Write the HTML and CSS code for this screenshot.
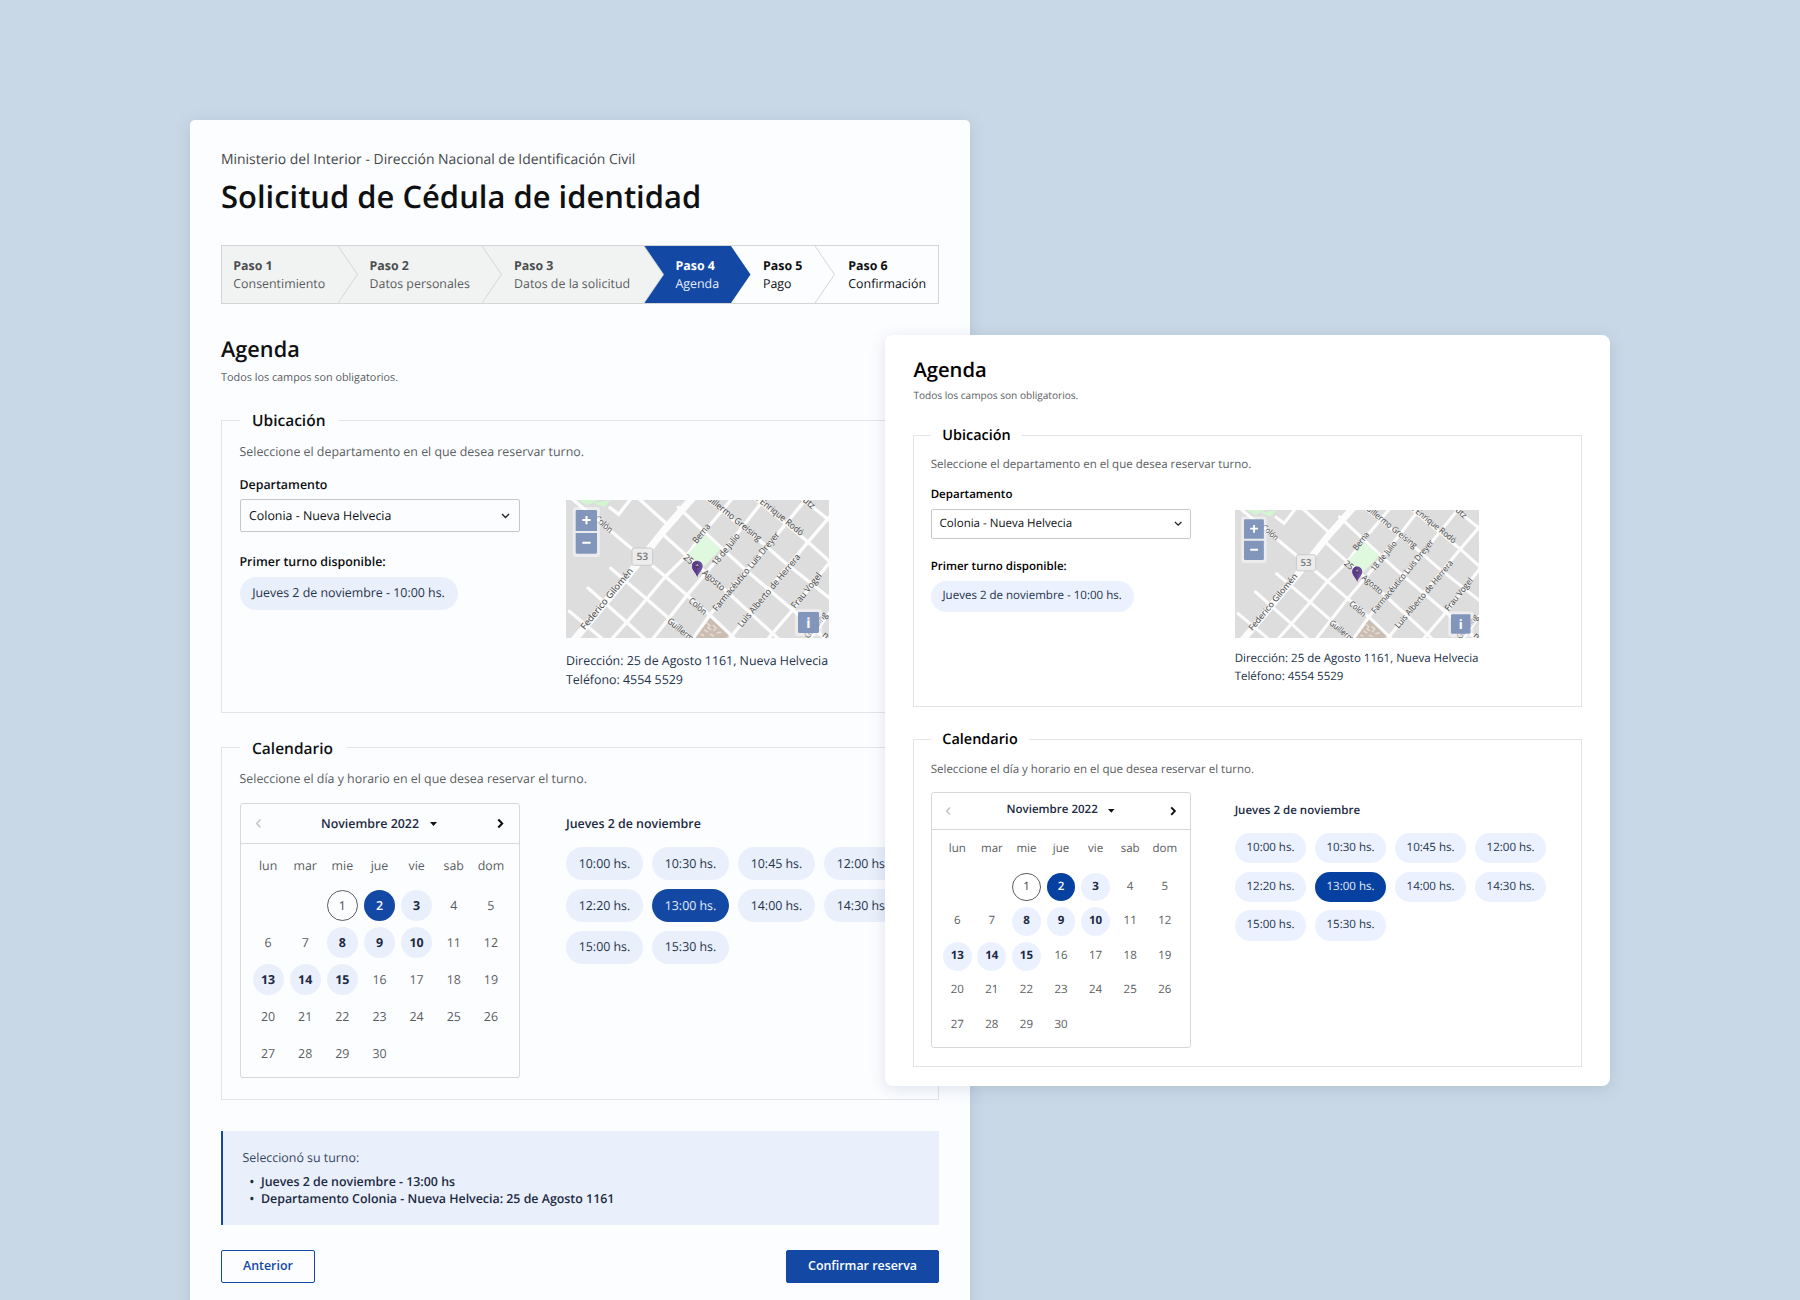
FILE: index.html
```html
<!DOCTYPE html>
<html lang="es">
<head>
<meta charset="utf-8">
<title>Solicitud de Cédula de identidad</title>
<link rel="stylesheet" href="styles.css">
</head>
<body>
<main class="page">
  <header>
    <p class="page-org">Ministerio del Interior - Dirección Nacional de Identificación Civil</p>
    <h1 class="page-title">Solicitud de Cédula de identidad</h1>
  </header>
  <ol class="steps">
    <li class="step step-first is-done"><b>Paso 1</b><span>Consentimiento</span><svg class="step-arrow" viewBox="0 0 20 57"><path d="M0 0L19.5 28.5L0 57"/></svg></li>
    <li class="step step-second is-done"><b>Paso 2</b><span>Datos personales</span><svg class="step-arrow" viewBox="0 0 20 57"><path d="M0 0L19.5 28.5L0 57"/></svg></li>
    <li class="step step-third is-done"><b>Paso 3</b><span>Datos de la solicitud</span><svg class="step-arrow" viewBox="0 0 20 57"><path d="M0 0L19.5 28.5L0 57"/></svg></li>
    <li class="step step-fourth is-current"><b>Paso 4</b><span>Agenda</span><svg class="step-arrow" viewBox="0 0 20 57"><path d="M0 0L19.5 28.5L0 57"/></svg></li>
    <li class="step step-fifth"><b>Paso 5</b><span>Pago</span><svg class="step-arrow" viewBox="0 0 20 57"><path d="M0 0L19.5 28.5L0 57"/></svg></li>
    <li class="step step-last"><b>Paso 6</b><span>Confirmación</span></li>
  </ol>
  <section class="agenda" data-agenda></section>
  <section class="notice">
    <p>Seleccionó su turno:</p>
    <ul>
      <li>Jueves 2 de noviembre - 13:00 hs</li>
      <li>Departamento Colonia - Nueva Helvecia: 25 de Agosto 1161</li>
    </ul>
  </section>
  <footer class="actions">
    <button class="button">Anterior</button>
    <button class="button button-primary">Confirmar reserva</button>
  </footer>
</main>

<aside class="detail">
  <section class="agenda" data-agenda></section>
</aside>

<template id="agenda-template">
  <h2 class="agenda-title">Agenda</h2>
  <p class="agenda-note">Todos los campos son obligatorios.</p>

  <fieldset class="group group-place">
    <legend>Ubicación</legend>
    <p class="group-text">Seleccione el departamento en el que desea reservar turno.</p>
    <div class="columns">
      <div class="column">
        <span class="label">Departamento</span>
        <div class="select">Colonia - Nueva Helvecia
          <svg width="9" height="6" viewBox="0 0 9 6"><path d="M1 1L4.5 4.5L8 1" fill="none" stroke="#222" stroke-width="1.4"/></svg>
        </div>
        <span class="label label-first">Primer turno disponible:</span>
        <span class="pill pill-first">Jueves 2 de noviembre - 10:00 hs.</span>
      </div>
      <div class="column column-map">
        <svg class="map" viewBox="48 63 789 414">
          <rect x="48" y="63" width="789" height="414" fill="#dedddd"/>
          <path d="M86 63L112 79L148 63ZM130 72L163 85L182 63Z" fill="#d2f5d2"/>
          <path d="M480 416L538 466L530 477H430Z" fill="#cbbdb1"/>
          <path d="M470 432l9 7-5 8 10 5M488 438l10 9-8 9M462 452l12 8M500 462l14-3M452 466l10 4M480 466l12 6" fill="none" stroke="#e4dcd4" stroke-width="5"/>
          <g class="roads">
            <path d="M50 46L345 292L480 408L560 485"/>
            <path d="M262 55L345 130M335 163L410 230L520 328L690 484"/>
            <path d="M385 85L520 212L590 275L760 420L840 492"/>
            <path d="M465 55L635 190L700 247L840 358"/>
            <path d="M605 50L775 190L840 248M748 52L840 126"/>
            <path d="M182 268L290 360L432 484M114 327L230 430L292 486M58 397L165 486"/>
            <path d="M180 486L230 430L290 360L345 294L410 230L460 162L548 57"/>
            <path d="M305 484L410 350L470 280L530 205L645 57"/>
            <path d="M428 480L480 407L530 342L640 218L772 55"/>
            <path d="M535 484L665 320L775 188L840 112"/>
            <path d="M650 484L720 402L840 248M778 482L840 400"/>
            <path d="M180 86L206 106L242 60"/>
            <path class="road-main" d="M58 500L250 270L345 150L432 52"/>
          </g>
          <path d="M465 168L513 210L461 264L413 225Z" fill="#dff9df"/>
          <rect x="246" y="207" width="62" height="52" rx="6" fill="#ececec" stroke="#c9c9c9" stroke-width="3"/>
          <text x="277" y="244" class="map-shield" text-anchor="middle">53</text>
          <g class="map-labels">
            <text transform="translate(132 122) rotate(41)" textLength="62" lengthAdjust="spacingAndGlyphs">Colón</text>
            <text transform="translate(104 454) rotate(-50.5)" textLength="230" lengthAdjust="spacingAndGlyphs">Federico Gilomén</text>
            <text transform="translate(440 195) rotate(-51)" textLength="67" lengthAdjust="spacingAndGlyphs">Berna</text>
            <text transform="translate(398 238) rotate(41)" textLength="30" lengthAdjust="spacingAndGlyphs">25</text>
            <text transform="translate(455 284) rotate(41)" textLength="80" lengthAdjust="spacingAndGlyphs">Agosto</text>
            <text transform="translate(498 262) rotate(-51)" textLength="116" lengthAdjust="spacingAndGlyphs">18 de Julio</text>
            <text transform="translate(470 62) rotate(39)" textLength="200" lengthAdjust="spacingAndGlyphs">uillermo Greising</text>
            <text transform="translate(612 58) rotate(39)" textLength="180" lengthAdjust="spacingAndGlyphs">e Enrique Rodó</text>
            <text transform="translate(757 66) rotate(41)" textLength="38" lengthAdjust="spacingAndGlyphs">utz</text>
            <text transform="translate(500 398) rotate(-50.5)" textLength="298" lengthAdjust="spacingAndGlyphs">Farmacéutico Luis Dreyer</text>
            <text transform="translate(575 446) rotate(-50)" textLength="276" lengthAdjust="spacingAndGlyphs">Luis Alberto de Herrera</text>
            <text transform="translate(736 390) rotate(-51)" textLength="128" lengthAdjust="spacingAndGlyphs">Frau Vogel</text>
            <text transform="translate(414 368) rotate(41)" textLength="62" lengthAdjust="spacingAndGlyphs">Colón</text>
            <text transform="translate(350 430) rotate(39)" textLength="92" lengthAdjust="spacingAndGlyphs">Guillerm</text>
            <text transform="translate(775 480) rotate(-51)" textLength="92" lengthAdjust="spacingAndGlyphs">Greising</text>
            <text transform="translate(815 470) rotate(41)">n</text>
          </g>
          <path d="M442 294C438 281 426 274 426 261A16 16 0 0 1 458 261C458 274 446 281 442 294Z" fill="#6b4a9b"/>
          <path d="M442 294C438 281 426 274 426 261A16 16 0 0 1 442 245Z" fill="#5b3a8a"/>
          <circle cx="442" cy="260" r="7" fill="#4d3a66"/>
          <path d="M437 259h9M442 255v5" stroke="#c9b9dc" stroke-width="2.5"/>
          <rect x="68" y="84" width="82" height="150" rx="10" fill="#fff" fill-opacity=".45"/>
          <path d="M77 97a4 4 0 0 1 4-4H137a4 4 0 0 1 4 4V156H77ZM77 162H141V220a4 4 0 0 1-4 4H81a4 4 0 0 1-4-4Z" fill="#7b90b9" fill-opacity=".94"/>
          <path d="M97 123H122M109.500 111V136M97 191H122" stroke="#fff" stroke-width="6"/>
          <rect x="735" y="390" width="82" height="82" rx="10" fill="#fff" fill-opacity=".45"/>
          <rect x="744" y="399" width="63" height="63" rx="4" fill="#7b90b9" fill-opacity=".94"/>
          <text x="775.500" y="446" class="map-info" text-anchor="middle">i</text>
        </svg>
        <p class="address">Dirección: 25 de Agosto 1161, Nueva Helvecia<br>Teléfono: 4554 5529</p>
      </div>
    </div>
  </fieldset>

  <fieldset class="group group-calendar">
    <legend>Calendario</legend>
    <p class="group-text">Seleccione el día y horario en el que desea reservar el turno.</p>
    <div class="columns">
      <div class="calendar">
        <div class="calendar-head">
          <svg width="7" height="11" viewBox="0 0 7 11"><path d="M5.500 1.500L1.700 5.500L5.500 9.500" fill="none" stroke="#c4c6c8" stroke-width="1.6"/></svg>
          <span class="calendar-month">Noviembre 2022 <svg width="7" height="4" viewBox="0 0 7 4"><path d="M0 0H7L3.500 4Z" fill="#111"/></svg></span>
          <svg width="7" height="11" viewBox="0 0 7 11"><path d="M1.300 1.500L5.200 5.500L1.300 9.500" fill="none" stroke="#0b0c0e" stroke-width="2"/></svg>
        </div>
        <div class="calendar-grid">
          <span>lun</span><span>mar</span><span>mie</span><span>jue</span><span>vie</span><span>sab</span><span>dom</span>
          <i class="day day-today">1</i><i class="day is-selected">2</i><i class="day is-open">3</i><i class="day">4</i><i class="day">5</i>
          <i class="day">6</i><i class="day">7</i><i class="day is-open">8</i><i class="day is-open">9</i><i class="day is-open">10</i><i class="day">11</i><i class="day">12</i>
          <i class="day is-open">13</i><i class="day is-open">14</i><i class="day is-open">15</i><i class="day">16</i><i class="day">17</i><i class="day">18</i><i class="day">19</i>
          <i class="day">20</i><i class="day">21</i><i class="day">22</i><i class="day">23</i><i class="day">24</i><i class="day">25</i><i class="day">26</i>
          <i class="day">27</i><i class="day">28</i><i class="day">29</i><i class="day">30</i>
        </div>
      </div>
      <div class="column column-slots">
        <span class="slots-title">Jueves 2 de noviembre</span>
        <div class="slots">
          <span class="pill">10:00 hs.</span><span class="pill">10:30 hs.</span><span class="pill">10:45 hs.</span><span class="pill">12:00 hs.</span>
          <span class="pill">12:20 hs.</span><span class="pill pill-selected">13:00 hs.</span><span class="pill">14:00 hs.</span><span class="pill">14:30 hs.</span>
          <span class="pill">15:00 hs.</span><span class="pill">15:30 hs.</span>
        </div>
      </div>
    </div>
  </fieldset>
</template>
<script src="agenda.js"></script>
</body>
</html>
```
FILE: agenda.js
```js
const template = document.getElementById("agenda-template");
document.querySelectorAll("[data-agenda]").forEach((host) => {
  host.append(template.content.cloneNode(true));
});
```
FILE: styles.css
```css
* { box-sizing: border-box; }

body {
  margin: 0;
  height: 1300px;
  overflow: hidden;
  position: relative;
  background: #c9d8e6;
  font-family: "Open Sans", "Noto Sans", sans-serif;
  font-size: 12.4px;
  line-height: 18px;
  color: #0e0f12;
  text-rendering: geometricPrecision;
}

h1, h2, p, ol, ul { margin: 0; padding: 0; }
svg { display: block; }

/* Two overlapping sheets on the canvas */
.page, .detail { position: absolute; }

.page {
  --blue: #1349a4;
  --tint: #e9effb;
  --sheet: #fcfdff;
  --line: #e3e5e7;
  --ink: #0e1012;
  left: 190px;
  top: 120px;
  width: 780px;
  height: 1220px;
  padding: 29.800px 31px 0;
  background: var(--sheet);
  border-radius: 5px;
  box-shadow: 0 3px 16px rgba(60, 90, 120, .16);
}

.detail {
  --blue: #0640a0;
  --tint: #ebf1ff;
  --sheet: #fff;
  --line: #e3e3e3;
  --ink: #000;
  left: 885px;
  top: 335px;
  width: 725px;
  height: 751px;
  padding: 21px 28px 0 28.400px;
  background: var(--sheet);
  border-radius: 8px;
  box-shadow: 0 3px 16px rgba(60, 90, 120, .16);
}
.detail .agenda { zoom: .931; }

.page-org { font-size: 13.950px; line-height: 20px; color: #45484b; }
.page-title { margin-top: 7.500px; font-size: 30.950px; line-height: 40px; font-weight: 600; color: var(--ink); }

.steps {
  display: flex;
  height: 59px;
  margin: 27.300px 0 32.600px;
  border: 1px solid #d3d5d6;
  list-style: none;
}
.step {
  position: relative;
  padding: 11px 0 0 32px;
  line-height: 18px;
  color: var(--ink);
}
.step b, .step span { display: block; white-space: nowrap; }
.step b { font-weight: 700; }
.step-first { width: 115.500px; padding-left: 11.300px; }
.step-second { width: 144.500px; }
.step-third { width: 161.500px; }
.step-fourth { width: 87.500px; }
.step-fifth { width: 84px; }
.step-last { flex: 1; padding-left: 33.300px; }
.step-arrow {
  position: absolute;
  left: 100%;
  top: 0;
  z-index: 1;
  width: 20px;
  height: 57px;
  fill: var(--sheet);
  stroke: #d3d5d6;
}
.is-done { background: #f1f3f2; color: #5a5d5f; }
.is-done b { color: #4b4d4f; }
.is-done .step-arrow { fill: #f1f3f2; }
.is-current { background: var(--blue); color: #e6edf9; }
.is-current b { color: #fff; }
.is-current .step-arrow { fill: var(--blue); stroke: none; }

.agenda-title { font-size: 21.700px; line-height: 28px; font-weight: 600; color: var(--ink); }
.agenda-note { margin-top: 6.300px; font-size: 10.850px; line-height: 16px; color: #5a5d60; }

.group {
  min-width: 0;
  margin: 24.700px 0 0;
  padding: 12.700px 0 0 17.500px;
  border: 1px solid var(--line);
}
.group-place { height: 302.800px; margin-top: 23.800px; }
.group-calendar { height: 362.300px; }
.group legend { padding: 0 12.500px; font-size: 15.500px; line-height: 20px; font-weight: 600; color: var(--ink); }
.group-text { color: #5a5d60; }

.columns { display: grid; grid-template-columns: 280px 1fr; gap: 46.500px; margin-top: 14.900px; }
.column { display: flex; flex-direction: column; align-items: flex-start; }
.column-map { padding-top: 24.500px; }
.column-slots { padding-top: 11.700px; }

.label, .slots-title { font-weight: 600; color: var(--ink); }
.label-first { margin-top: 21.300px; }
.select {
  display: flex;
  align-items: center;
  justify-content: space-between;
  align-self: stretch;
  height: 32.500px;
  margin-top: 5.500px;
  padding: 0 8.500px 0 8.500px;
  border: 1px solid #c6c8ca;
  border-radius: 2px;
}

/* The scaled sheet rounds its hairlines differently, so its rhythm is tuned apart */
.detail .columns { margin-top: 14.200px; }
.detail .column-map { padding-top: 24px; }
.detail .group { padding-top: 12.900px; }
.detail .group legend { padding-top: 1.200px; }
.detail .group-place { height: 302.200px; margin-top: 24.600px; }
.detail .group-calendar { height: 362px; margin-top: 24.600px; }
.detail .select { margin-top: 5px; }

.pill {
  display: flex;
  align-items: center;
  justify-content: center;
  height: 33px;
  border-radius: 17px;
  background: var(--tint);
  color: #24334a;
  white-space: nowrap;
}
.pill-first { width: 218px; margin-top: 5.700px; }
.pill-selected { background: var(--blue); color: #e6edf9; }

.map { width: 263px; height: 138px; }
.roads { fill: none; stroke: #fcfcfc; stroke-width: 10; stroke-linecap: round; }
.road-main { stroke-width: 22; }
.map-labels { font-size: 27px; fill: #444; stroke: #e8e8e8; stroke-width: 2.5; paint-order: stroke; stroke-linejoin: round; }
.map-shield { font-size: 31px; font-weight: 600; fill: #777; }
.map-info { font-size: 42px; font-weight: 700; fill: #fff; }
.address { margin-top: 12.200px; line-height: 19.400px; color: #24334a; white-space: nowrap; }

.calendar { height: 275px; border: 1px solid #d6d8da; border-radius: 3px; }
.calendar-head {
  display: flex;
  align-items: center;
  justify-content: space-between;
  height: 40px;
  padding: 0 14.500px;
  border-bottom: 1px solid #d6d8da;
}
.calendar-month { display: flex; align-items: center; gap: 11px; margin-left: -1px; font-weight: 600; color: #1c2a42; }
.calendar-grid {
  display: grid;
  grid-template-columns: repeat(7, 37.150px);
  grid-template-rows: 42.700px repeat(5, 37.150px);
  justify-content: center;
  align-items: center;
  justify-items: center;
  color: #5a5d60;
}
.day {
  display: flex;
  align-items: center;
  justify-content: center;
  width: 31px;
  height: 31px;
  border-radius: 50%;
  font-style: normal;
}
.day-today { grid-column: 3; border: 1px solid #5a5d60; font-weight: 500; color: #45484b; }
.is-open { background: var(--tint); font-weight: 700; color: #1c2a42; }
.is-selected { background: var(--blue); font-weight: 600; color: #fff; }

.slots-title { color: #1c2a42; }
.slots { display: grid; grid-template-columns: repeat(4, 77px); gap: 8.800px 9px; margin-top: 14.300px; }

.notice {
  height: 94.500px;
  margin-top: 30.500px;
  padding: 18.600px 0 0 19.500px;
  border-left: 2px solid var(--blue);
  background: var(--tint);
  color: #37465c;
}
.notice ul { margin-top: 5.700px; list-style: none; line-height: 17.200px; font-weight: 600; color: #1c2a42; }
.notice li { display: flex; padding-left: 7px; }
.notice li::before { content: "•"; width: 11.500px; }

.actions { display: flex; justify-content: space-between; margin-top: 24.500px; }
.button {
  height: 33px;
  padding: 0 21px;
  border: 1px solid var(--blue);
  border-radius: 2px;
  background: var(--sheet);
  font: 600 12.400px/18px "Open Sans", "Noto Sans", sans-serif;
  color: var(--blue);
}
.button-primary { background: var(--blue); color: #fff; }
```
